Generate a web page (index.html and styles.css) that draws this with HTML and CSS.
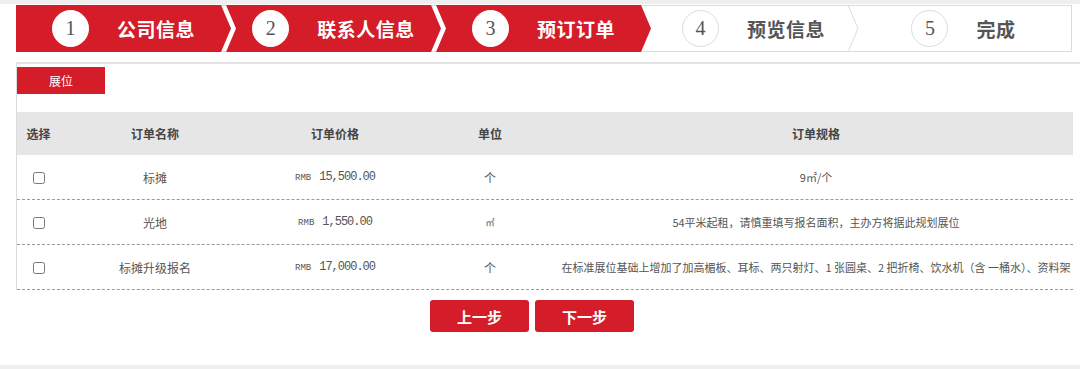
FILE: index.html
```html
<!DOCTYPE html>
<html lang="zh-CN">
<head>
    <meta charset="UTF-8">
    <title>预订订单</title>
    <link rel="stylesheet" href="styles.css">
</head>
<body>
    <div class="page">
        <div class="steps">
            <div class="step step-done first">
                <span class="num">1</span><span class="label">公司信息</span>
            </div>
            <div class="step step-done">
                <span class="num">2</span><span class="label">联系人信息</span>
            </div>
            <div class="step step-done">
                <span class="num">3</span><span class="label">预订订单</span>
            </div>
            <div class="step">
                <span class="num">4</span><span class="label">预览信息</span>
                <svg class="sep" width="12" height="47" viewBox="0 0 12 47">
                    <polyline points="1,0 11,23.5 1,47" fill="none" stroke="#dcdcdc" stroke-width="1"/>
                </svg>
            </div>
            <div class="step">
                <span class="num">5</span><span class="label">完成</span>
            </div>
        </div>

        <div class="content">
            <div class="tab">展位</div>
            <div class="order-table">
                <div class="row head">
                    <div class="cell">选择</div>
                    <div class="cell">订单名称</div>
                    <div class="cell">订单价格</div>
                    <div class="cell">单位</div>
                    <div class="cell">订单规格</div>
                </div>
                <div class="row">
                    <div class="cell"><input type="checkbox"></div>
                    <div class="cell">标摊</div>
                    <div class="cell price"><small>RMB</small>15,500.00</div>
                    <div class="cell">个</div>
                    <div class="cell spec">9㎡/个</div>
                </div>
                <div class="row">
                    <div class="cell"><input type="checkbox"></div>
                    <div class="cell">光地</div>
                    <div class="cell price"><small>RMB</small>1,550.00</div>
                    <div class="cell unit-small">㎡</div>
                    <div class="cell spec">54平米起租，请慎重填写报名面积，主办方将据此规划展位</div>
                </div>
                <div class="row">
                    <div class="cell"><input type="checkbox"></div>
                    <div class="cell">标摊升级报名</div>
                    <div class="cell price"><small>RMB</small>17,000.00</div>
                    <div class="cell">个</div>
                    <div class="cell spec">在标准展位基础上增加了加高楣板、耳标、两只射灯、1 张圆桌、2 把折椅、饮水机（含 一桶水）、资料架</div>
                </div>
            </div>
        </div>

        <div class="actions">
            <button>上一步</button>
            <button>下一步</button>
        </div>
    </div>
</body>
</html>
```

FILE: styles.css
```css
body {
    margin: 0;
    background-color: #efefef;
    font-family: "Noto Sans CJK SC", "Liberation Sans", sans-serif;
    color: #555;
}

.page {
    margin-top: 4px;
    height: 361px;
    background-color: #fff;
    overflow: hidden;
}

/* 步骤条 */
.steps {
    display: flex;
    margin: 1px 8px 0 16px;
    height: 47px;
    box-sizing: border-box;
    border: 1px solid #dcdcdc;
    border-left: none;
    background-color: #fff;
}

.step {
    position: relative;
    flex: 1;
    display: flex;
    align-items: center;
    justify-content: center;
    margin-left: -5px;
    margin-top: -1px;
    height: 47px;
    color: #555;
}

.step.first {
    margin-left: 0;
}

.step-done {
    background-color: #d51c29;
    color: #fff;
    clip-path: polygon(0 0, calc(100% - 10px) 0, 100% 50%, calc(100% - 10px) 100%, 0 100%, 10px 50%);
}

.step-done.first {
    clip-path: polygon(0 0, calc(100% - 10px) 0, 100% 50%, calc(100% - 10px) 100%, 0 100%);
}

.num {
    width: 37px;
    height: 37px;
    box-sizing: border-box;
    border-radius: 50%;
    background-color: #fff;
    border: 1px solid #dcdcdc;
    display: flex;
    align-items: center;
    justify-content: center;
    font-family: "Liberation Serif", serif;
    font-size: 20px;
    color: #555;
    margin-right: 28px;
}

.step-done .num {
    border-color: #fff;
}

.label {
    font-size: 19px;
    font-weight: bold;
    letter-spacing: 0.5px;
}

.sep {
    position: absolute;
    right: 2px;
    top: 0;
}

/* 订单区域 */
.content {
    margin: 10px 0 0 16px;
    border-top: 2px solid #e4e4e4;
    border-left: 1px solid #dcdcdc;
    padding-top: 3px;
}

.tab {
    width: 88px;
    height: 27px;
    line-height: 27px;
    background-color: #d51c29;
    color: #fff;
    font-size: 12px;
    text-align: center;
}

.order-table {
    width: 1056px;
    margin-top: 18px;
    font-size: 12px;
}

.row {
    display: grid;
    grid-template-columns: 43px 190px 170px 140px 512px;
    height: 44px;
    align-items: center;
    border-bottom: 1px dashed #9a9a9a;
}

.row.head {
    height: 43px;
    background-color: #e6e6e6;
    border-bottom: none;
    font-weight: bold;
    color: #444;
}

.cell {
    text-align: center;
    white-space: nowrap;
    overflow: hidden;
}

.cell input {
    width: 12px;
    height: 12px;
    margin: 4px 0 0 0;
}

.price {
    font-family: "Liberation Mono", monospace;
    font-size: 12px;
    letter-spacing: -1px;
}

.price small {
    font-size: 9px;
    letter-spacing: 0;
    margin-right: 8px;
}

.unit-small {
    font-size: 9px;
}

.spec {
    font-size: 11px;
}

/* 按钮 */
.actions {
    display: flex;
    justify-content: center;
    gap: 6px;
    margin-top: 10px;
    padding-right: 16px;
}

.actions button {
    width: 99px;
    height: 32px;
    border: none;
    border-radius: 3px;
    background-color: #d51c29;
    color: #fff;
    font-family: "Noto Sans CJK SC", sans-serif;
    font-size: 15px;
    font-weight: bold;
    cursor: pointer;
}
```
